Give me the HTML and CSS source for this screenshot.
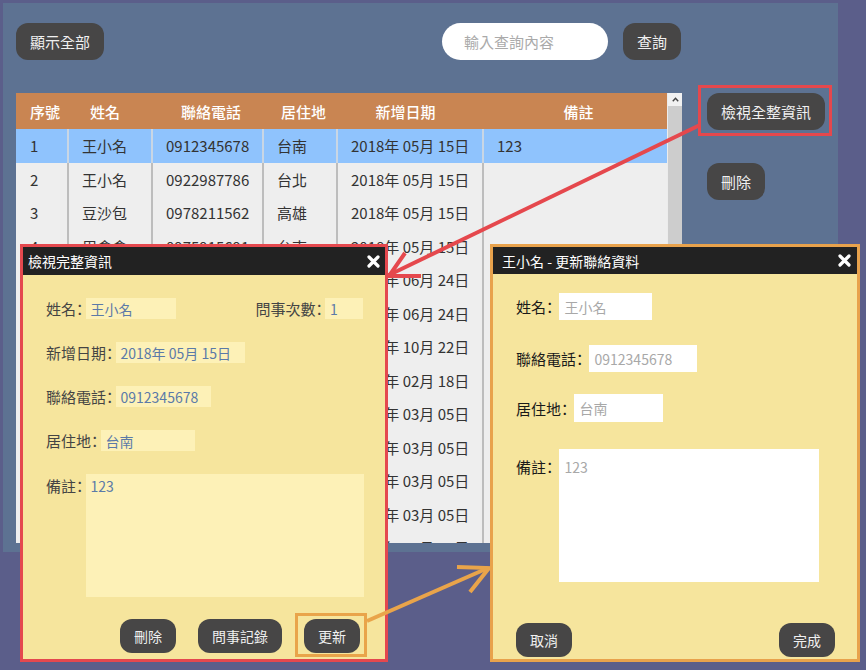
FILE: index.html
```html
<!DOCTYPE html>
<html lang="zh-Hant">
<head>
<meta charset="utf-8">
<title>聯絡資料</title>
<link rel="stylesheet" href="styles.css">
</head>
<body>
<div class="panel">
  <div class="topbar">
    <button class="btn">顯示全部</button>
    <div class="search">
      <div class="search-input"><span>輸入查詢內容</span></div>
      <button class="btn">查詢</button>
    </div>
  </div>

  <div class="table">
    <div class="tgrid">
      <div class="thead">
        <div>序號</div><div>姓名</div><div>聯絡電話</div><div>居住地</div><div>新增日期</div><div>備註</div>
      </div>
      <div class="trow sel"><div>1</div><div>王小名</div><div>0912345678</div><div>台南</div><div>2018年 05月 15日</div><div>123</div></div>
      <div class="trow"><div>2</div><div>王小名</div><div>0922987786</div><div>台北</div><div>2018年 05月 15日</div><div></div></div>
      <div class="trow"><div>3</div><div>豆沙包</div><div>0978211562</div><div>高雄</div><div>2018年 05月 15日</div><div></div></div>
      <div class="trow"><div>4</div><div>周倉倉</div><div>0975915691</div><div>台南</div><div>2018年 05月 15日</div><div></div></div>
      <div class="trow"><div>5</div><div>林大華</div><div>0933123456</div><div>台中</div><div>2018年 06月 24日</div><div></div></div>
      <div class="trow"><div>6</div><div>陳小美</div><div>0955678123</div><div>台北</div><div>2018年 06月 24日</div><div></div></div>
      <div class="trow"><div>7</div><div>張三</div><div>0911222333</div><div>新竹</div><div>2018年 10月 22日</div><div></div></div>
      <div class="trow"><div>8</div><div>李四</div><div>0922333444</div><div>高雄</div><div>2019年 02月 18日</div><div></div></div>
      <div class="trow"><div>9</div><div>黃五</div><div>0933444555</div><div>台南</div><div>2019年 03月 05日</div><div></div></div>
      <div class="trow"><div>10</div><div>吳六</div><div>0944555666</div><div>台南</div><div>2019年 03月 05日</div><div></div></div>
      <div class="trow"><div>11</div><div>鄭七</div><div>0955666777</div><div>嘉義</div><div>2019年 03月 05日</div><div></div></div>
      <div class="trow"><div>12</div><div>王八</div><div>0966777888</div><div>屏東</div><div>2019年 03月 05日</div><div></div></div>
      <div class="trow"><div>13</div><div>劉九</div><div>0977888999</div><div>台東</div><div>2019年 03月 05日</div><div></div></div>
    </div>
    <div class="scrollbar">
      <div class="sb-btn"><svg width="7" height="5" viewBox="0 0 7 5"><polyline points="0.8,4.2 3.5,1.2 6.2,4.2" fill="none" stroke="#444" stroke-width="1.4"/></svg></div>
      <div class="sb-track"></div>
    </div>
  </div>

  <div class="side">
    <button class="btn">檢視全整資訊</button>
    <button class="btn">刪除</button>
  </div>
</div>

<div class="modal m-view">
  <div class="m-title">
    <span>檢視完整資訊</span>
    <svg class="close" width="13" height="13" viewBox="0 0 13 13"><path d="M2 2L11 11M11 2L2 11" stroke="#fff" stroke-width="3.2" stroke-linecap="round"/></svg>
  </div>
  <div class="m-body v-body">
    <div class="vrow split">
      <div class="grp"><span class="lbl">姓名：</span><span class="vf w90">王小名</span></div>
      <div class="grp"><span class="lbl">問事次數：</span><span class="vf w38">1</span></div>
    </div>
    <div class="vrow"><span class="lbl">新增日期：</span><span class="vf w129">2018年 05月 15日</span></div>
    <div class="vrow"><span class="lbl">聯絡電話：</span><span class="vf w95">0912345678</span></div>
    <div class="vrow"><span class="lbl">居住地：</span><span class="vf w94">台南</span></div>
    <div class="vrow area"><span class="lbl">備註：</span><span class="vf varea">123</span></div>
    <div class="v-actions">
      <button class="btn btn-sm">刪除</button>
      <button class="btn btn-sm">問事記錄</button>
      <button class="btn btn-sm">更新</button>
    </div>
  </div>
</div>

<div class="modal m-edit">
  <div class="m-title">
    <span>王小名 - 更新聯絡資料</span>
    <svg class="close" width="13" height="13" viewBox="0 0 13 13"><path d="M2 2L11 11M11 2L2 11" stroke="#fff" stroke-width="3.2" stroke-linecap="round"/></svg>
  </div>
  <div class="m-body e-body">
    <div class="erow r1"><span class="lbl2">姓名：</span><span class="ef ew93">王小名</span></div>
    <div class="erow r2"><span class="lbl2">聯絡電話：</span><span class="ef ew108">0912345678</span></div>
    <div class="erow r3"><span class="lbl2">居住地：</span><span class="ef ew89">台南</span></div>
    <div class="erow r4"><span class="lbl2">備註：</span><span class="ef earea">123</span></div>
    <div class="e-actions">
      <button class="btn btn-sm">取消</button>
      <button class="btn btn-sm">完成</button>
    </div>
  </div>
</div>

<svg class="annot" width="866" height="670" viewBox="0 0 866 670">
  <rect x="699.5" y="86.5" width="131" height="48" fill="none" stroke="#e5484d" stroke-width="3"/>
  <line x1="700" y1="125" x2="389" y2="275" stroke="#e5484d" stroke-width="4"/>
  <polyline points="421,276 389,276 405,253" fill="none" stroke="#e5484d" stroke-width="4"/>
  <rect x="296.5" y="614.5" width="69" height="41" fill="none" stroke="#e9a44a" stroke-width="3"/>
  <line x1="367" y1="621" x2="488" y2="568" stroke="#e9a44a" stroke-width="4"/>
  <polyline points="457,567 489,568 470,592" fill="none" stroke="#e9a44a" stroke-width="4"/>
</svg>
</body>
</html>
```

FILE: styles.css
```css
* { box-sizing: border-box; }

body {
  margin: 0;
  padding: 3px;
  width: 866px;
  height: 670px;
  background: #5b5e8a;
  font-family: "Noto Sans CJK TC", "Noto Sans", sans-serif;
  position: relative;
  overflow: hidden;
}

.panel {
  width: 835px;
  height: 549px;
  background: #5d7292;
  padding: 20px 0 0 13px;
  display: grid;
  grid-template-columns: 666px 144px;
  grid-template-rows: 37px 450px;
  column-gap: 25px;
  row-gap: 33px;
}

.btn {
  height: 37px;
  padding: 0 14px;
  border: none;
  border-radius: 12px;
  background: #474646;
  color: #f0f0f0;
  font-family: "Noto Sans CJK TC", sans-serif;
  font-size: 15px;
  display: inline-flex;
  align-items: center;
  justify-content: center;
  white-space: nowrap;
}

.btn-sm {
  height: 34px;
  font-size: 14px;
  border-radius: 12px;
}

.topbar {
  grid-column: 1;
  grid-row: 1;
  display: flex;
  justify-content: space-between;
  align-items: center;
  padding-right: 1px;
}

.search {
  display: flex;
  gap: 15px;
}

.search-input {
  width: 166px;
  height: 37px;
  border-radius: 19px;
  background: #fff;
  padding-left: 22px;
  display: flex;
  align-items: center;
  color: #aaa;
  font-size: 15px;
}

.table {
  grid-column: 1;
  grid-row: 2;
  display: flex;
  height: 450px;
  overflow: hidden;
}

.tgrid {
  width: 651px;
  overflow: hidden;
}

.thead {
  display: grid;
  grid-template-columns: 58px 62px 150px 35px 169px 177px;
  height: 36px;
  background: #c98552;
  color: #fff;
  font-size: 15px;
  font-weight: 500;
}

.thead > div {
  display: flex;
  align-items: center;
  justify-content: center;
  white-space: nowrap;
}

.trow {
  display: grid;
  grid-template-columns: 51px 84px 111px 74px 146px 185px;
  height: 33.5px;
  background: #eeeeee;
  color: #333;
  font-size: 15px;
}

.trow > div {
  display: flex;
  align-items: center;
  padding-left: 13px;
  border-left: 2px solid #bdbdbd;
  white-space: nowrap;
  overflow: hidden;
}

.trow > div:first-child {
  border-left: none;
  padding-left: 14px;
}

.trow.sel { background: #8fc3fd; }
.trow.sel > div { border-left-color: #c9d6e4; }
.trow.sel > div:first-child { border-left: none; }

.scrollbar {
  width: 15px;
  display: flex;
  flex-direction: column;
  background: #cdcdcd;
  border-left: 1px solid #ececec;
}

.sb-btn {
  height: 13px;
  background: #f1f1f1;
  display: flex;
  align-items: center;
  justify-content: center;
}

.sb-track { flex: 1; }

.side {
  grid-column: 2;
  grid-row: 2;
  display: flex;
  flex-direction: column;
  align-items: flex-start;
  gap: 33px;
}

/* modals */
.modal {
  position: absolute;
  top: 244px;
  height: 418px;
  display: flex;
  flex-direction: column;
  border: 3px solid;
}

.m-view { left: 20px; width: 368px; border-color: #e4484e; }
.m-edit { left: 490px; width: 370px; border-color: #e8a24c; }

.m-title {
  background: #222;
  color: #fff;
  font-size: 14px;
  display: flex;
  align-items: center;
  justify-content: space-between;
}

.m-view .m-title { height: 28px; padding: 0 5px; }
.m-edit .m-title { height: 27px; padding: 0 6px 0 9px; }

.m-body {
  flex: 1;
  background: #f6e59d;
}

/* view modal */
.v-body { padding: 23px 20px 0 23px; }

.vrow {
  display: flex;
  align-items: center;
  height: 21px;
  margin-bottom: 23px;
}

.vrow.split { justify-content: space-between; padding-right: 2px; }
.grp { display: flex; align-items: center; }

.lbl {
  font-size: 15px;
  color: #444;
  font-feature-settings: "halt";
  white-space: nowrap;
}

.vf {
  height: 21px;
  background: #fdf1b7;
  color: #5b7aa8;
  font-size: 14px;
  padding-left: 5px;
  margin-left: 2px;
  display: flex;
  align-items: center;
  white-space: nowrap;
}

.w90 { width: 90px; }
.w38 { width: 38px; }
.w129 { width: 129px; }
.w95 { width: 95px; }
.w94 { width: 94px; }

.vrow.area {
  height: 123px;
  align-items: flex-start;
  margin-bottom: 22px;
}

.vrow.area .lbl { line-height: 24px; }

.varea {
  width: 278px;
  height: 123px;
  align-items: flex-start;
  padding-top: 2px;
  line-height: 21px;
}

.v-actions {
  display: flex;
  justify-content: flex-end;
  gap: 22px;
  padding-right: 5px;
}

/* edit modal */
.e-body { padding: 19px 22px 0 23px; }

.erow { display: flex; align-items: center; }
.r1 { height: 27px; margin-bottom: 25px; }
.r2 { height: 27px; margin-bottom: 22px; }
.r3 { height: 28px; margin-bottom: 27px; }
.r4 { height: 133px; align-items: flex-start; margin-bottom: 41px; }

.lbl2 {
  font-size: 15px;
  color: #1a1a1a;
  font-feature-settings: "halt";
  margin-right: 5px;
  white-space: nowrap;
}

.r4 .lbl2 { line-height: 24px; padding-top: 6px; }

.ef {
  height: 100%;
  background: #fff;
  color: #a8a8a8;
  font-size: 14px;
  padding-left: 6px;
  display: flex;
  align-items: center;
}

.ew93 { width: 93px; }
.ew108 { width: 108px; }
.ew89 { width: 89px; }

.earea {
  width: 260px;
  align-items: flex-start;
  padding-top: 8px;
  line-height: 20px;
}

.e-actions {
  display: flex;
  justify-content: space-between;
}

.annot {
  position: absolute;
  left: 0;
  top: 0;
  pointer-events: none;
}
```
